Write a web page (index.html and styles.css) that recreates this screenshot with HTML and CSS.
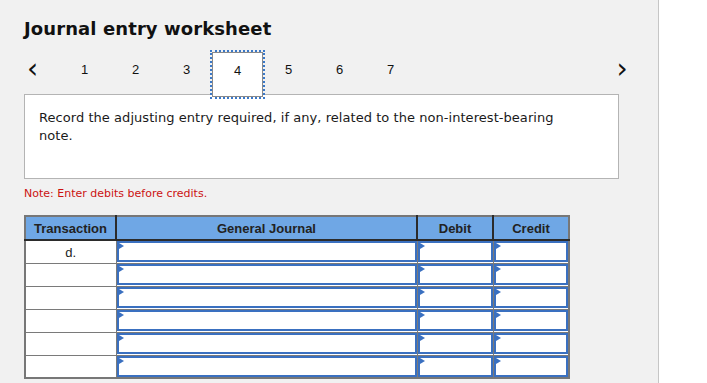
FILE: index.html
```html
<!DOCTYPE html>
<html lang="en">
<head>
  <meta charset="UTF-8" />
  <title>Journal entry worksheet</title>
  <link rel="stylesheet" href="styles.css">
</head>
<body>
  <div class="panel">
    <h1 class="title">Journal entry worksheet</h1>

    <div class="steps">
      <span class="arrow prev">&#x2039;</span>
      <span class="step">1</span>
      <span class="step">2</span>
      <span class="step">3</span>
      <span class="step active">4</span>
      <span class="step">5</span>
      <span class="step">6</span>
      <span class="step">7</span>
      <span class="arrow next">&#x203A;</span>
    </div>

    <div class="question">
      Record the adjusting entry required, if any, related to the non-interest-bearing note.
    </div>

    <p class="note">Note: Enter debits before credits.</p>

    <table class="journal">
      <thead>
        <tr>
          <th class="col-trans">Transaction</th>
          <th class="col-gj">General Journal</th>
          <th class="col-num">Debit</th>
          <th class="col-num">Credit</th>
        </tr>
      </thead>
      <tbody>
        <tr>
          <td class="trans">d.</td>
          <td><div class="entry"></div></td>
          <td><div class="entry"></div></td>
          <td><div class="entry"></div></td>
        </tr>
        <tr>
          <td class="trans"></td>
          <td><div class="entry"></div></td>
          <td><div class="entry"></div></td>
          <td><div class="entry"></div></td>
        </tr>
        <tr>
          <td class="trans"></td>
          <td><div class="entry"></div></td>
          <td><div class="entry"></div></td>
          <td><div class="entry"></div></td>
        </tr>
        <tr>
          <td class="trans"></td>
          <td><div class="entry"></div></td>
          <td><div class="entry"></div></td>
          <td><div class="entry"></div></td>
        </tr>
        <tr>
          <td class="trans"></td>
          <td><div class="entry"></div></td>
          <td><div class="entry"></div></td>
          <td><div class="entry"></div></td>
        </tr>
        <tr>
          <td class="trans"></td>
          <td><div class="entry"></div></td>
          <td><div class="entry"></div></td>
          <td><div class="entry"></div></td>
        </tr>
      </tbody>
    </table>
  </div>
</body>
</html>
```

FILE: styles.css
```css
* {
  box-sizing: border-box;
}

html,
body {
  margin: 0;
  height: 100%;
  background-color: #ffffff;
  overflow: hidden;
}

.panel {
  width: 659px;
  height: 383px;
  padding: 18px 0 0 24px;
  background-color: #f1f1f1;
  border-right: 1px solid #c6c6c6;
  font-family: "DejaVu Sans", Verdana, sans-serif;
  color: #111;
}

.title {
  margin: 0;
  font-size: 18px;
  line-height: 22px;
  font-weight: bold;
  color: #111;
  letter-spacing: 0.1px;
}

/* step navigation */
.steps {
  display: flex;
  align-items: flex-start;
  width: 610px;
  height: 42px;
  margin-top: 12px;
}

.arrow {
  font-size: 28px;
  line-height: 34px;
  color: #111;
  text-align: center;
}

.prev {
  width: 35px;
  text-align: left;
  padding-left: 3px;
}

.next {
  width: 24px;
  margin-left: auto;
}

.step {
  width: 51px;
  height: 34px;
  line-height: 36px;
  text-align: center;
  font-family: "Liberation Sans", Arial, sans-serif;
  font-size: 13px;
  color: #111;
}

.step.active {
  position: relative;
  z-index: 1;
  height: 45px;
  line-height: 35px;
  background-color: #ffffff;
  border: 1px solid #8a8a8a;
  outline: 2px dotted #3a78c8;
  outline-offset: 0;
}

.question {
  width: 595px;
  height: 85px;
  padding: 14px 40px 13px 14px;
  background-color: #ffffff;
  border: 1px solid #b4b4b4;
  font-size: 13px;
  letter-spacing: 0.05px;
  line-height: 18px;
  color: #1a1a1a;
}

.note {
  margin: 8px 0 0;
  font-size: 11px;
  line-height: 14px;
  color: #cc1111;
}

/* journal table */
.journal {
  margin-top: 14px;
  width: 546px;
  border-collapse: collapse;
  font-family: "Liberation Sans", Arial, sans-serif;
  font-size: 13px;
  border: 2px solid #777;
}

.journal th {
  height: 24px;
  padding: 0;
  background-color: #6fa7e5;
  color: #222;
  font-weight: bold;
  border-left: 2px solid #2b2b2b;
  border-bottom: 2px solid #2b2b2b;
}

.journal th:first-child {
  border-left: none;
}

.col-trans {
  width: 91px;
}

.col-num {
  width: 76px;
}

.journal td {
  height: 23px;
  padding: 0;
  background-color: #ffffff;
  border: 1px solid #7a7a7a;
}

.journal td.trans {
  text-align: center;
  vertical-align: top;
  padding-top: 4px;
  color: #222;
}

.entry {
  position: relative;
  height: 21px;
  border: 2px solid #3a70c0;
  background-color: #ffffff;
}

.entry::before {
  content: "";
  position: absolute;
  left: 0;
  top: 0;
  border-top: 3px solid transparent;
  border-bottom: 3px solid transparent;
  border-left: 5px solid #3a70c0;
}
```
